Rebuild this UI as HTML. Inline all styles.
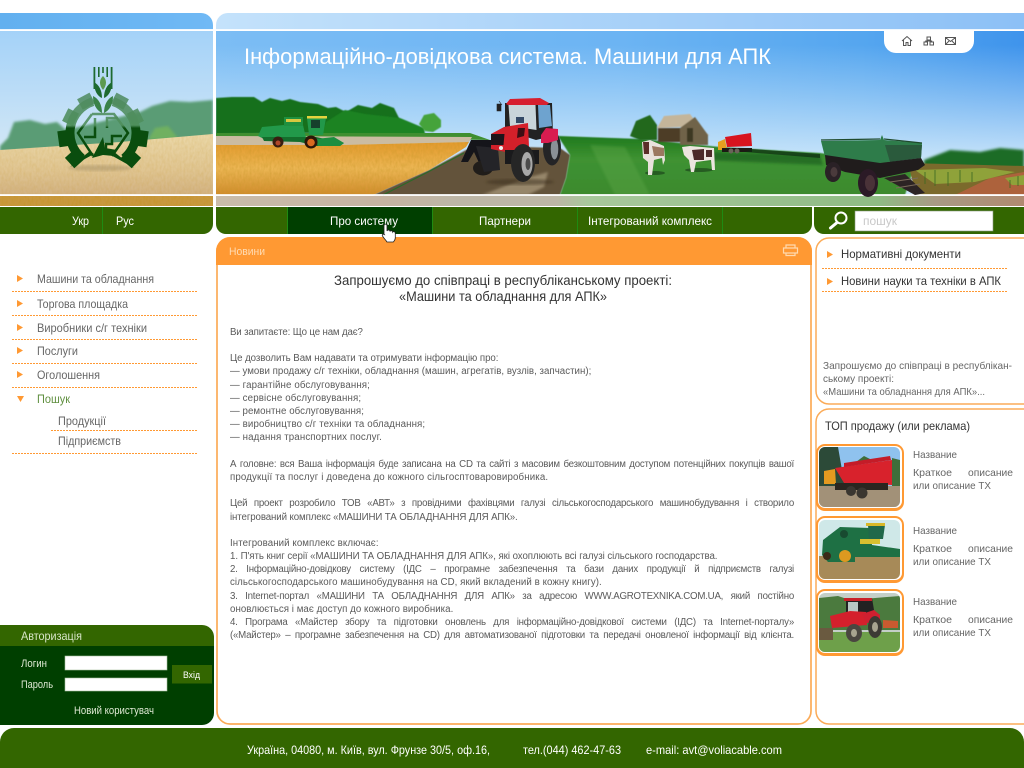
<!DOCTYPE html>
<html lang="uk"><head><meta charset="utf-8"><title>Машини для АПК</title>
<style>
html,body{margin:0;padding:0;background:#fff}
#p{position:relative;width:1024px;height:768px;overflow:hidden;font-family:"Liberation Sans",sans-serif}
#g{position:absolute;left:0;top:0}
.b{position:absolute;left:230px;width:564px;font-size:9.7px;line-height:13px;height:13px;color:#5a5a5a;white-space:nowrap;letter-spacing:-.15px}
.j{text-align:justify;text-align-last:justify;white-space:normal;letter-spacing:-.22px}
</style></head><body><div id="p">
<svg id="g" width="1024" height="768" viewBox="0 0 1024 768" xmlns="http://www.w3.org/2000/svg" font-family="Liberation Sans, sans-serif">
<defs>
<clipPath id="cl"><path d="M0 13H201a12 12 0 0 1 12 12V207H0Z"/></clipPath>
<clipPath id="cr"><path d="M228 13H1024V207H216V25a12 12 0 0 1 12-12Z"/></clipPath>
<linearGradient id="sl" x1="0" y1="0" x2="0" y2="1"><stop offset="0" stop-color="#a4d2f8"/><stop offset=".7" stop-color="#d0e6f6"/><stop offset="1" stop-color="#d7e9f5"/></linearGradient>
<linearGradient id="s1" x1="0" y1="0" x2="1" y2="0"><stop offset="0" stop-color="#7cbdf4"/><stop offset=".5" stop-color="#6cb4f3"/><stop offset=".8" stop-color="#55a6ef"/><stop offset="1" stop-color="#3f94ec"/></linearGradient>
<linearGradient id="s2" gradientUnits="userSpaceOnUse" x1="0" y1="45" x2="0" y2="165"><stop offset="0" stop-color="#d4ebfb" stop-opacity="0"/><stop offset="1" stop-color="#d4ebfb" stop-opacity=".95"/></linearGradient>
<linearGradient id="ts" x1="0" y1="0" x2="1" y2="0"><stop offset="0" stop-color="#c4e2fb"/><stop offset="1" stop-color="#8cc0f6"/></linearGradient>
<linearGradient id="tl" x1="0" y1="0" x2="1" y2="0"><stop offset="0" stop-color="#62b0ef"/><stop offset="1" stop-color="#70b9f5"/></linearGradient>
<linearGradient id="fl" x1="0" y1="0" x2="0" y2="1"><stop offset="0" stop-color="#ebd8a8"/><stop offset=".6" stop-color="#e0c592"/><stop offset="1" stop-color="#d2b282"/></linearGradient>
<linearGradient id="wh" x1="0" y1="0" x2="0" y2="1"><stop offset="0" stop-color="#e39a2c"/><stop offset=".5" stop-color="#ecb654"/><stop offset="1" stop-color="#d08c2c"/></linearGradient>
<linearGradient id="gr" x1="0" y1="0" x2="0" y2="1"><stop offset="0" stop-color="#1f7a1e"/><stop offset=".4" stop-color="#3f9232"/><stop offset="1" stop-color="#3c8a2e"/></linearGradient>
<linearGradient id="bs" x1="0" y1="0" x2="1" y2="0"><stop offset="0" stop-color="#c9bcaa"/><stop offset=".2" stop-color="#c6b4a2"/><stop offset=".3" stop-color="#bdb6a6"/><stop offset=".42" stop-color="#bdb6a6"/><stop offset=".46" stop-color="#a8c89c"/><stop offset=".82" stop-color="#8fbb84"/><stop offset=".89" stop-color="#a89a84"/><stop offset="1" stop-color="#b08a70"/></linearGradient>
<linearGradient id="lg" gradientUnits="userSpaceOnUse" x1="0" y1="92" x2="0" y2="128"><stop offset="0" stop-color="#4f8a60" stop-opacity=".85"/><stop offset=".92" stop-color="#4f8f5c" stop-opacity=".9"/><stop offset="1" stop-color="#0a4d0e"/></linearGradient>
<pattern id="dot" width="3" height="1" patternUnits="userSpaceOnUse"><rect width="2" height="1" fill="#ff9933"/></pattern>
<filter id="f"><feGaussianBlur stdDeviation=".5"/></filter>
<filter id="f2"><feGaussianBlur stdDeviation="1.2"/></filter>
<filter id="n" x="0" y="0" width="100%" height="100%"><feTurbulence type="fractalNoise" baseFrequency=".5 .22" numOctaves="2" seed="4"/><feColorMatrix values="0 0 0 0 .55  0 0 0 0 .3  0 0 0 0 .02  1.6 0 0 0 -.55"/></filter>
<clipPath id="t1"><rect x="819" y="447" width="81" height="60" rx="6"/></clipPath>
<clipPath id="t2"><rect x="819" y="520" width="81" height="59" rx="6"/></clipPath>
<clipPath id="t3"><rect x="819" y="593" width="81" height="59" rx="6"/></clipPath>
<clipPath id="cw"><path d="M216 145L340 145 469 142 466 147 429 170 373 195H216Z"/></clipPath>
<clipPath id="cf"><path d="M0 150L60 146 120 142 213 134V195H0Z"/></clipPath>
</defs>

<!-- LEFT HEADER PANEL -->
<g clip-path="url(#cl)">
<rect x="0" y="13" width="214" height="17" fill="url(#tl)"/>
<rect x="0" y="31" width="214" height="164" fill="url(#sl)"/>
<path filter="url(#f2)" d="M0 146L8 138 14 122 30 120 45 124 57 122 66 130 140 112 152 106 170 101 190 102 213 100V140L0 152Z" fill="#5a9c74"/>
<path filter="url(#f2)" d="M148 140L155 128 168 126 178 138Z" fill="#6fb060"/>
<path d="M0 150L60 146 120 142 213 134V195H0Z" fill="url(#fl)"/>
<g clip-path="url(#cf)"><rect x="0" y="130" width="214" height="66" filter="url(#n)" opacity=".2"/></g>
<rect x="0" y="194" width="214" height="2" fill="#fff" opacity=".85"/>
<rect x="0" y="196" width="214" height="10" fill="#c9983f"/>
<rect x="0" y="196" width="214" height="10" filter="url(#n)" opacity=".7"/>
<rect x="0" y="206" width="214" height="1" fill="#fff"/>
<rect x="0" y="29" width="214" height="2" fill="#fff" opacity=".9"/>

<!-- logo -->
<g>
<ellipse cx="100" cy="168" rx="32" ry="3" fill="#8c7a55" opacity=".35" filter="url(#f2)"/>
<g fill="url(#lg)">
<path d="M95.100 103.200L82.700 109.800 77.100 99.200 89.500 92.600Z"/>
<path d="M79 113.600L72.900 126.200 62.100 120.900 68.300 108.300Z"/>
<path d="M110.900 103.200L123.300 109.800 128.900 99.200 116.500 92.600Z"/>
<path d="M127 113.600L133.100 126.200 143.900 120.900 137.700 108.300Z"/>
</g>
<g fill="#0a4d0e">
<path d="M72.200 129.300L74.400 145.100 59.500 147.200 57.300 131.400Z"/>
<path d="M133.800 129.300L131.600 145.100 146.500 147.200 148.700 131.400Z"/>
<path d="M76 147.900L85.400 158.300 74.300 168.300 64.900 157.900Z"/>
<path d="M130 147.900L120.600 158.300 131.700 168.300 141.100 157.900Z"/>
</g>
<g fill="none" stroke="url(#lg)" stroke-width="9">
<path d="M92.800 101.600A33 33 0 0 0 81.800 158.300"/>
<path d="M113.200 101.600A33 33 0 0 1 124.200 158.300"/>
<path stroke-width="2.500" d="M92 114H114L128 133 112 156M92 114L78 133 93 156"/>
<path stroke-width="2.500" d="M84 137H95V118M106 151V144H112V136H122"/>
<path stroke-width="2.500" d="M118 118H107V128"/>
</g>
<g fill="#0a4d0e">
<path d="M70 167L90 151 94 154Z"/><path d="M134 168L113 151 109 154Z"/>
<path d="M92 158L103 137 105 148 117 150 114 156 103 155Z"/>
</g>
<g fill="#1d6a30">
<path d="M93.500 67h1.800v22h-1.800zM98 67h1.600v10h-1.600zM102.200 67h1.600v6h-1.600zM106.400 67h1.600v10h-1.600zM110.700 67h1.800v22h-1.800z"/>
<path d="M103 76C107 80 107 85 103 90 99 85 99 80 103 76Z" fill="#5d9a50"/>
<path d="M94 82C99 85 102 90 102 98 97 96 94 90 94 82ZM112 82C107 85 104 90 104 98 109 96 112 90 112 82Z"/>
<path d="M93 96C99 99 102 105 102 113 96 110 93 104 93 96ZM113 96C107 99 104 105 104 113 110 110 113 104 113 96Z" fill="#3a8248"/>
</g>
</g>
</g>

<!-- RIGHT HEADER PANEL -->
<g clip-path="url(#cr)">
<rect x="216" y="13" width="808" height="17" fill="url(#ts)"/>
<rect x="216" y="31" width="808" height="164" fill="url(#s1)"/>
<rect x="216" y="31" width="808" height="164" fill="url(#s2)"/>
<rect x="216" y="29" width="808" height="2" fill="#fff" opacity=".85"/>
<!-- forest left -->
<path filter="url(#f)" d="M216 98L232 97 254 97 262 102 270 98 282 101 290 99 300 102 318 104 328 108 336 107 346 112 358 105 372 108 380 103 394 108 400 120 410 126 415 132 216 134Z" fill="#176f1b"/>
<path filter="url(#f)" d="M326 122L345 110 365 114 400 118 424 128 425 134H322Z" fill="#1d8324"/>
<path filter="url(#f)" d="M419 124L424 115 434 113 441 120 441 127 433 132 425 131Z" fill="#45a33a"/>
<path d="M216 133H470L490 140 216 136Z" fill="#3f8f30"/>
<path d="M216 136L472 137 469 142 340 145 216 146Z" fill="#cbbca2"/>
<!-- road -->
<path filter="url(#f)" d="M373 195L429 170 466 150 490 146 560 148 570 155 566 178 560 195Z" fill="#64533a"/>
<path filter="url(#f2)" d="M482 195L505 186 530 177 548 172 544 187 528 195Z" fill="#96866a"/>
<path d="M383 195L428 172 464 153" fill="none" stroke="#2c6a28" stroke-width="1.200"/>
<!-- wheat -->
<path d="M216 145L340 145 469 142 466 147 429 170 373 195H216Z" fill="url(#wh)"/>
<g clip-path="url(#cw)"><rect x="216" y="140" width="260" height="56" filter="url(#n)" opacity=".45"/></g>
<!-- green field -->
<path filter="url(#f)" d="M558 136L640 139 720 147 820 153 915 165 905 195H560L566 178 570 155Z" fill="url(#gr)"/>
<path filter="url(#f2)" d="M590 145L625 147 650 195H615Z" fill="#5fa84a" opacity=".4"/>
<path filter="url(#f2)" d="M700 152L820 155 823 165 700 160Z" fill="#14591a" opacity=".6"/>
<!-- right field -->
<path filter="url(#f2)" d="M924 160L950 150 980 152 1000 148 1024 150V170H924Z" fill="#1d6c25"/>
<path d="M908 163L1024 166V195H916Z" fill="#7b6a2c"/>
<path d="M990 178L1024 172V195H955Z" fill="#ad623c"/>
<g fill="#8fa23a"><path d="M915 170l70-2 30 4-40 10-40 2zM1005 178l19-3v10l-12 0z"/></g>
<g stroke="#3e6b22" stroke-width="1.200" opacity=".7"><path d="M925 172v12M935 170v16M948 172v14M960 170v12M972 172v10M1010 180v8M1018 176v10"/></g>
<!-- bottom strip -->
<rect x="216" y="194" width="808" height="2" fill="#fff" opacity=".85"/>
<rect x="216" y="196" width="808" height="10" fill="url(#bs)"/>
<rect x="216" y="206" width="808" height="1" fill="#fff"/>

<!-- combine -->
<g>
<path d="M258 136L262 127 284 125 303 125 306 138 266 140Z" fill="#22994a"/>
<path d="M284 117L303 117 303 126 284 126Z" fill="#1f9040"/><path d="M286 119h15v3h-15z" fill="#d7c840"/>
<path d="M307 118h19l-3 17h-14Z" fill="#22984a"/><path d="M307 116h20v2.500h-20z" fill="#e6d23e"/><path d="M311 120h9v8h-9z" fill="#16402c"/>
<path d="M262 137H316L344 143 340 146 316 146 300 142 264 141Z" fill="#146e2c"/>
<path d="M316 139L334 137 344 143 340 146 318 146Z" fill="#1c8e40"/>
<circle cx="278" cy="142" r="5.500" fill="#3a1e10"/><circle cx="278" cy="143" r="2.500" fill="#b0482a"/>
<circle cx="311" cy="142" r="6.500" fill="#2b1608"/><circle cx="311" cy="142.500" r="3.800" fill="#d86a20"/>
</g>

<!-- tractor -->
<g>
<ellipse cx="520" cy="182" rx="34" ry="3" fill="#3a2e1a" opacity=".5" filter="url(#f2)"/>
<path d="M461 162L471 140 491 140 493 152 483 154 487 165 480 165 474 152 468 162Z" fill="#15151a"/>
<ellipse cx="483" cy="168" rx="10" ry="7.500" fill="#201d1a"/>
<path d="M476 146L498 148 500 170 484 172Z" fill="#242428"/>
<ellipse cx="552" cy="148" rx="9" ry="17.500" fill="#242426"/><ellipse cx="554.500" cy="149" rx="3.800" ry="10.500" fill="#8a9096"/>
<path d="M505 103H552L553 136 536 140 505 130Z" fill="#222"/>
<path d="M508.500 105H535.500L536.500 130 510 126Z" fill="#c8d5da"/>
<path d="M538 105H550L552 126 539 128Z" fill="#6ea3cf"/>
<path d="M516 117h8v6h-8z" fill="#334a66"/>
<path d="M506 104L510 99 540 98 549 103 547 105 508 105Z" fill="#d71f2e"/>
<path d="M499 101l3 4M497 104h4v7h-4z" fill="#222" stroke="#222" stroke-width=".6"/>
<path d="M491 134L504 127 528 123 529 147 510 153 491 149Z" fill="#d4202a"/>
<path d="M491 134h13.500l-1 11h-12.500Z" fill="#1e141a"/><path d="M518 128h7l-1 8-7 2Z" fill="#3c0e14"/>
<path d="M541 135L546 128 558 129 558 140 548 143 541 143Z" fill="#d81c50"/>
<circle cx="501" cy="148" r="2" fill="#eee"/>
<path d="M505 150h34v14h-34Z" fill="#1a1a1c"/>
<ellipse cx="523" cy="163" rx="12" ry="19" fill="#262626"/><ellipse cx="527" cy="164" rx="5.500" ry="12" fill="#a8a8a8"/><ellipse cx="528" cy="164" rx="2.500" ry="6" fill="#4b4b4b"/>
</g>

<!-- barn, tree -->
<g filter="url(#f)">
<path d="M630 136L636 121 650 115 657 125 657 140 640 140Z" fill="#23671f"/>
<path d="M658 128L680 128 680 142 658 142Z" fill="#4e3d28"/>
<path d="M657 128L664 116 690 114 699 126 710 136 696 128 680 127Z" fill="#c4b59a"/>
<path d="M680 128L695 117 708 135 708 145H680Z" fill="#6f6448"/>
<path d="M687 128h6v14h-6z" fill="#3e3724"/>
</g>

<!-- cows -->
<g>
<ellipse cx="655" cy="173" rx="10" ry="2" fill="#173a18" opacity=".6"/>
<path d="M642 142L650 140 664 146 665 160 663 165 662 158 654 160 652 175 648 175 648 162 643 158Z" fill="#e9e2dc"/>
<path d="M652 146L664 148 664 156 654 156Z" fill="#9b7860"/><path d="M643 142h6v12h-5Z" fill="#5b2e28"/>
<ellipse cx="699" cy="170" rx="14" ry="2" fill="#173a18" opacity=".6"/>
<path d="M682 147L690 146 714 148 715 170 712 170 711 160 696 162 694 172 691 172 689 160 684 155Z" fill="#ece5df"/>
<path d="M692 150L704 149 704 160 694 160ZM706 150h6v7h-6z" fill="#4b2a28"/>
</g>

<!-- red truck -->
<g>
<path d="M725 137L751 133 752 146 727 147Z" fill="#d8141e"/>
<path d="M718 142L725 139 727 150 718 150Z" fill="#e5a020"/>
<path d="M722 148H752V152H722Z" fill="#1c1a14"/>
<circle cx="731" cy="151" r="2.500" fill="#6a6458"/><circle cx="737" cy="151" r="2.500" fill="#6a6458"/>
<path d="M752 149L820 154V158L745 152Z" fill="#0e2c12" opacity=".7"/>
</g>

<!-- trailer -->
<g>
<path d="M821 141L880 140 882 135 884 140 922 143 921 158 880 163 825 157Z" fill="#2e7c4a"/>
<path d="M885 145L922 145 921 158 890 162Z" fill="#2a5a3c"/>
<path d="M821 140L880 139M884 139L922 143" stroke="#1f4a2c" stroke-width="1.200" fill="none"/>
<path d="M825 155L880 163 921 158 925 165 918 170 880 178 845 172 826 165Z" fill="#201c1c"/>
<ellipse cx="833" cy="172" rx="8" ry="10" fill="#2a2126"/><ellipse cx="834" cy="172" rx="3.500" ry="5" fill="#4a3a3c"/>
<ellipse cx="868" cy="183" rx="10" ry="14" fill="#2b1a26"/><ellipse cx="870" cy="183" rx="5" ry="8" fill="#4a3238"/>
<path d="M884 178L905 174 925 193 915 195Z" fill="#2c2424"/>
<path d="M890 182L918 178M896 188L920 184" stroke="#7a6a5a" stroke-width="1"/>
</g>

<!-- top icons pill -->
<path d="M884 31H974V41a12 12 0 0 1-12 12H896a12 12 0 0 1-12-12Z" fill="#fff"/>
<g fill="none" stroke="#555" stroke-width="1">
<path d="M902 41l5-4.500 5 4.500M903.500 40v5.500h2.500v-3h2v3h2.500V40"/>
<path d="M927 37h3.500v3h-3.500zM924 42h3.500v3h-3.500zM930 42h3.500v3h-3.500zM928.700 40v1.500M925.700 42v-1h6v1"/>
<path d="M945.500 37.500h10v7h-10zM945.500 37.500l5 4 5-4M945.500 44.500l3.500-3.500M955.500 44.500l-3.500-3.500"/>
</g>
</g>

<!-- nav bars -->
<path d="M0 207H213V224a10 10 0 0 1-10 10H0Z" fill="#336600"/>
<rect x="102" y="207" width="1" height="27" fill="#1f8a12"/>
<path d="M216 207H812V224a10 10 0 0 1-10 10H226a10 10 0 0 1-10-10Z" fill="#336600"/>
<rect x="287" y="207" width="145" height="27" fill="#003f00"/>
<rect x="287" y="207" width="1" height="27" fill="#1f8a12"/><rect x="432" y="207" width="1" height="27" fill="#1f8a12"/><rect x="577" y="207" width="1" height="27" fill="#1f8a12"/><rect x="722" y="207" width="1" height="27" fill="#1f8a12"/>
<path d="M814 207H1024V234H824a10 10 0 0 1-10-10Z" fill="#336600"/>
<rect x="855" y="211" width="138" height="20" fill="#fff" stroke="#8a9a80" stroke-width=".6"/>
<g fill="none" stroke="#fff"><circle cx="841" cy="218" r="5.500" stroke-width="2"/><path d="M836.500 223L830.500 228" stroke-width="3" stroke-linecap="round"/></g>

<!-- main panel -->
<path d="M217 251a13 13 0 0 1 13-13H798a13 13 0 0 1 13 13V711a13 13 0 0 1-13 13H230a13 13 0 0 1-13-13Z" fill="#fff" stroke="#fbab58" stroke-width="1.700"/>
<path d="M216 265V251a14 14 0 0 1 14-14H798a14 14 0 0 1 14 14V265Z" fill="#ff9933"/>
<g fill="none" stroke="#ffd9ae" stroke-width="1.200"><path d="M786 248v-3h9v3M783.500 248h14v5h-14zM786 253v2.500h9V253"/></g>

<!-- right panels -->
<path d="M1025 238H829a13 13 0 0 0-13 13V391a13 13 0 0 0 13 13H1025" fill="#fff" stroke="#fbab58" stroke-width="1.500"/>
<path d="M1025 409H829a13 13 0 0 0-13 13V711a13 13 0 0 0 13 13H1025" fill="#fff" stroke="#fbab58" stroke-width="1.500"/>

<!-- thumbs -->
<rect x="816" y="444" width="88" height="67" rx="9" fill="#ff9933"/>
<rect x="816" y="516" width="88" height="67" rx="9" fill="#ff9933"/>
<rect x="816" y="589" width="88" height="67" rx="9" fill="#ff9933"/>
<rect x="818" y="446" width="84" height="62" rx="7" fill="#fff"/><rect x="818" y="518" width="84" height="62" rx="7" fill="#fff"/><rect x="818" y="591" width="84" height="62" rx="7" fill="#fff"/>
<g clip-path="url(#t1)"><rect x="819" y="447" width="81" height="60" fill="#8fc2ee"/>
<path d="M819 447H838L842 470 846 488H819Z" fill="#2c4a38"/><path d="M856 462l8-6 10 5ZM892 458l8 2V490H892Z" fill="#3f6e3a"/>
<rect x="819" y="486" width="81" height="21" fill="#a29178"/>
<path d="M824 471l11-2 1 15H824Z" fill="#e49a20"/>
<path d="M835 468L892 460 892 485 844 483Z" fill="#d8222c"/><path d="M844 463L890 456 891 460 844 467Z" fill="#c41c28"/>
<path d="M835 483H888V490H835Z" fill="#2a2620"/><circle cx="851" cy="491" r="5" fill="#3a3630"/><circle cx="862" cy="493" r="5.500" fill="#3a3630"/></g>
<g clip-path="url(#t2)"><rect x="819" y="520" width="81" height="59" fill="#cfe8e8"/>
<rect x="819" y="556" width="81" height="23" fill="#a78a58"/>
<path d="M823 540L840 527 870 528 872 545 900 549V557H855V562H828L822 555Z" fill="#1e7044"/>
<path d="M868 525h17l-2 14h-14Z" fill="#20684a"/><path d="M866 523h19v3h-19z" fill="#d8b828"/><path d="M860 539h20v5h-20z" fill="#d8c030"/>
<circle cx="845" cy="556" r="6" fill="#dd9920"/><circle cx="827" cy="556" r="4" fill="#3a2a18"/>
<circle cx="844" cy="534" r="4" fill="#184a30"/></g>
<g clip-path="url(#t3)"><rect x="819" y="593" width="81" height="59" fill="#c4cfc8"/>
<path d="M819 598L838 596 850 600 875 598 900 596V630H819Z" fill="#4b7a3e"/>
<rect x="819" y="632" width="81" height="20" fill="#6ea04a"/>
<path d="M819 628h14v12h-14Z" fill="#6a5a40"/>
<path d="M846 600L872 598 876 622 846 622Z" fill="#222"/><path d="M848 602h10v14h-10Z" fill="#b9c8c4"/><path d="M844 598h28v3h-28Z" fill="#c8202a"/>
<path d="M830 616L850 611 866 612 867 625 832 628Z" fill="#d4202c"/><path d="M862 614l12-4 6 5 0 8-14 0Z" fill="#cf2030"/>
<ellipse cx="854" cy="633" rx="8" ry="9" fill="#4a4640"/><ellipse cx="854" cy="633" rx="3" ry="4" fill="#a8a490"/>
<ellipse cx="875" cy="627" rx="7" ry="11" fill="#3c3a34"/><ellipse cx="875" cy="627" rx="3" ry="5" fill="#a8a490"/>
<path d="M883 620l15 1v7h-15Z" fill="#c95a30"/></g>

<!-- login -->
<path d="M0 625H202a12 12 0 0 1 12 12V646H0Z" fill="#336600"/>
<path d="M0 646H214V713a12 12 0 0 1-12 12H0Z" fill="#003f00"/>
<rect x="65" y="656" width="102" height="14" fill="#fff" stroke="#a8c0a0" stroke-width=".6"/>
<rect x="65" y="678" width="102" height="13" fill="#fff" stroke="#a8c0a0" stroke-width=".6"/>
<rect x="172" y="665" width="40" height="18.500" fill="#336600"/>

<!-- footer -->
<path d="M0 742a14 14 0 0 1 14-14H1010a14 14 0 0 1 14 14V768H0Z" fill="#336600"/>

<!-- menu arrows -->
<g fill="#ff9933">
<path d="M17 275l6 3.500-6 3.500zM17 300l6 3.500-6 3.500zM17 324l6 3.500-6 3.500zM17 347l6 3.500-6 3.500zM17 371l6 3.500-6 3.500zM17 396h7l-3.500 6z"/>
<path d="M827 251l6 3.500-6 3.500zM827 278l6 3.500-6 3.500z"/>
</g>
<g fill="url(#dot)">
<rect x="11" y="291" width="187" height="1"/><rect x="11" y="315" width="187" height="1"/><rect x="11" y="339" width="187" height="1"/><rect x="11" y="363" width="187" height="1"/><rect x="11" y="387" width="187" height="1"/><rect x="51" y="430" width="147" height="1"/><rect x="11" y="453" width="187" height="1"/><rect x="821" y="268" width="187" height="1"/><rect x="821" y="291" width="187" height="1"/>
</g>

<!-- text -->
<g fill="#fff">
<text x="244" y="64" font-size="22" textLength="527" lengthAdjust="spacingAndGlyphs">Інформаційно-довідкова система. Машини для АПК</text>
<text x="72" y="225" font-size="12" textLength="17" lengthAdjust="spacingAndGlyphs">Укр</text>
<text x="116" y="225" font-size="12" textLength="18" lengthAdjust="spacingAndGlyphs">Рус</text>
<text x="330" y="225" font-size="12" textLength="68" lengthAdjust="spacingAndGlyphs">Про систему</text>
<text x="479" y="225" font-size="12" textLength="52" lengthAdjust="spacingAndGlyphs">Партнери</text>
<text x="588" y="225" font-size="12" textLength="124" lengthAdjust="spacingAndGlyphs">Інтегрований комплекс</text>
<text x="247" y="754" font-size="12" textLength="243" lengthAdjust="spacingAndGlyphs">Україна, 04080, м. Київ, вул. Фрунзе 30/5, оф.16,</text>
<text x="523" y="754" font-size="12" textLength="98" lengthAdjust="spacingAndGlyphs">тел.(044) 462-47-63</text>
<text x="646" y="754" font-size="12" textLength="136" lengthAdjust="spacingAndGlyphs">e-mail: avt@voliacable.com</text>
</g>
<text x="863" y="225" font-size="12" fill="#c8c8c8" textLength="34" lengthAdjust="spacingAndGlyphs">пошук</text>
<text x="229" y="255" font-size="11" fill="#ffdcb4" textLength="36" lengthAdjust="spacingAndGlyphs">Новини</text>
<text x="334" y="285" font-size="14" fill="#333" textLength="338" lengthAdjust="spacingAndGlyphs">Запрошуємо до співпраці в республіканському проекті:</text>
<text x="399" y="301" font-size="14" fill="#333" textLength="208" lengthAdjust="spacingAndGlyphs">«Машини та обладнання для АПК»</text>
<g fill="#666" font-size="12">
<text x="37" y="283" textLength="117" lengthAdjust="spacingAndGlyphs">Машини та обладнання</text>
<text x="37" y="308" textLength="91" lengthAdjust="spacingAndGlyphs">Торгова площадка</text>
<text x="37" y="332" textLength="110" lengthAdjust="spacingAndGlyphs">Виробники с/г техніки</text>
<text x="37" y="355" textLength="41" lengthAdjust="spacingAndGlyphs">Послуги</text>
<text x="37" y="379" textLength="63" lengthAdjust="spacingAndGlyphs">Оголошення</text>
<text x="37" y="403" textLength="33" fill="#5f8f3f" lengthAdjust="spacingAndGlyphs">Пошук</text>
<text x="58" y="425" textLength="48" lengthAdjust="spacingAndGlyphs">Продукції</text>
<text x="58" y="445" textLength="63" lengthAdjust="spacingAndGlyphs">Підприємств</text>
</g>
<g fill="#dfe9d4" font-size="11">
<text x="21" y="640" fill="#d8e6c8" font-size="12" textLength="61" lengthAdjust="spacingAndGlyphs">Авторизація</text>
<text x="21" y="667" textLength="26" lengthAdjust="spacingAndGlyphs">Логин</text>
<text x="21" y="688" textLength="32" lengthAdjust="spacingAndGlyphs">Пароль</text>
<text x="74" y="714" textLength="80" lengthAdjust="spacingAndGlyphs">Новий користувач</text>
<text x="183" y="678" font-size="9.500" fill="#fff" textLength="17" lengthAdjust="spacingAndGlyphs">Вхід</text>
</g>
<g fill="#333" font-size="12">
<text x="841" y="258" textLength="120" lengthAdjust="spacingAndGlyphs">Нормативні документи</text>
<text x="841" y="285" textLength="160" lengthAdjust="spacingAndGlyphs">Новини науки та техніки в АПК</text>
<text x="825" y="430" textLength="145" lengthAdjust="spacingAndGlyphs">ТОП продажу (или реклама)</text>
</g>
<g fill="#666" font-size="10.500">
<text x="823" y="369" textLength="189" lengthAdjust="spacingAndGlyphs">Запрошуємо до співпраці в республікан-</text>
<text x="823" y="382" textLength="71" lengthAdjust="spacingAndGlyphs">ському проекті:</text>
<text x="823" y="395" textLength="162" lengthAdjust="spacingAndGlyphs">«Машини та обладнання для АПК»...</text>
<text x="913" y="458" textLength="44" lengthAdjust="spacingAndGlyphs">Название</text><text x="913" y="476" textLength="39" lengthAdjust="spacingAndGlyphs">Краткое</text><text x="968" y="476" textLength="45" lengthAdjust="spacingAndGlyphs">описание</text><text x="913" y="489" textLength="78" lengthAdjust="spacingAndGlyphs">или описание ТХ</text>
<text x="913" y="534" textLength="44" lengthAdjust="spacingAndGlyphs">Название</text><text x="913" y="552" textLength="39" lengthAdjust="spacingAndGlyphs">Краткое</text><text x="968" y="552" textLength="45" lengthAdjust="spacingAndGlyphs">описание</text><text x="913" y="565" textLength="78" lengthAdjust="spacingAndGlyphs">или описание ТХ</text>
<text x="913" y="605" textLength="44" lengthAdjust="spacingAndGlyphs">Название</text><text x="913" y="623" textLength="39" lengthAdjust="spacingAndGlyphs">Краткое</text><text x="968" y="623" textLength="45" lengthAdjust="spacingAndGlyphs">описание</text><text x="913" y="636" textLength="78" lengthAdjust="spacingAndGlyphs">или описание ТХ</text>
</g>

<!-- hand cursor -->
<path d="M384 226c0-2.500 3-2.500 3 0v5c.5-1.500 3-1.500 3 .5.5-1.300 2.700-1 2.700.7.700-1 2.600-.6 2.600 1v4.300c0 2-1 3.500-2 4.500h-6.300c-1-1.700-3-3.500-4.500-6-.8-1.400.7-2.700 2-1.300l-.5 0Z" fill="#fff" stroke="#222" stroke-width=".8"/>
</svg>

<div class="b" style="top:326px">Ви запитаєте: Що це нам дає?</div>
<div class="b" style="top:352px;letter-spacing:-.06px">Це дозволить Вам надавати та отримувати інформацію про:</div>
<div class="b" style="top:365px;letter-spacing:.03px">— умови продажу с/г техніки, обладнання (машин, агрегатів, вузлів, запчастин);</div>
<div class="b" style="top:379px;letter-spacing:.13px">— гарантійне обслуговування;</div>
<div class="b" style="top:392px;letter-spacing:.15px">— сервісне обслуговування;</div>
<div class="b" style="top:405px;letter-spacing:.07px">— ремонтне обслуговування;</div>
<div class="b" style="top:418px;letter-spacing:.13px">— виробництво с/г техніки та обладнання;</div>
<div class="b" style="top:431px;letter-spacing:.14px">— надання транспортних послуг.</div>
<div class="b j" style="top:458px">А головне: вся Ваша інформація буде записана на CD та сайті з масовим безкоштовним доступом потенційних покупців вашої</div>
<div class="b" style="top:471px;letter-spacing:.15px">продукції та послуг і доведена до кожного сільгосптоваровиробника.</div>
<div class="b j" style="top:497px">Цей проект розробило ТОВ «АВТ» з провідними фахівцями галузі сільськогосподарського машинобудування і створило</div>
<div class="b" style="top:511px;letter-spacing:-.1px">інтегрований комплекс «МАШИНИ ТА ОБЛАДНАННЯ ДЛЯ АПК».</div>
<div class="b" style="top:537px;letter-spacing:.08px">Інтегрований комплекс включає:</div>
<div class="b" style="top:550px;letter-spacing:-.06px">1. П'ять книг серії «МАШИНИ ТА ОБЛАДНАННЯ ДЛЯ АПК», які охоплюють всі галузі сільського господарства.</div>
<div class="b j" style="top:563px">2. Інформаційно-довідкову систему (ІДС – програмне забезпечення та бази даних продукції й підприємств галузі</div>
<div class="b" style="top:576px;letter-spacing:.07px">сільськогосподарського машинобудування на CD, який вкладений в кожну книгу).</div>
<div class="b j" style="top:590px">3. Internet-портал «МАШИНИ ТА ОБЛАДНАННЯ ДЛЯ АПК» за адресою WWW.AGROTEXNIKA.COM.UA, який постійно</div>
<div class="b" style="top:603px;letter-spacing:.05px">оновлюється і має доступ до кожного виробника.</div>
<div class="b j" style="top:616px">4. Програма «Майстер збору та підготовки оновлень для інформаційно-довідкової системи (ІДС) та Internet-порталу»</div>
<div class="b j" style="top:629px">(«Майстер» – програмне забезпечення на CD) для автоматизованої підготовки та передачі оновленої інформації від клієнта.</div>
</div></body></html>
